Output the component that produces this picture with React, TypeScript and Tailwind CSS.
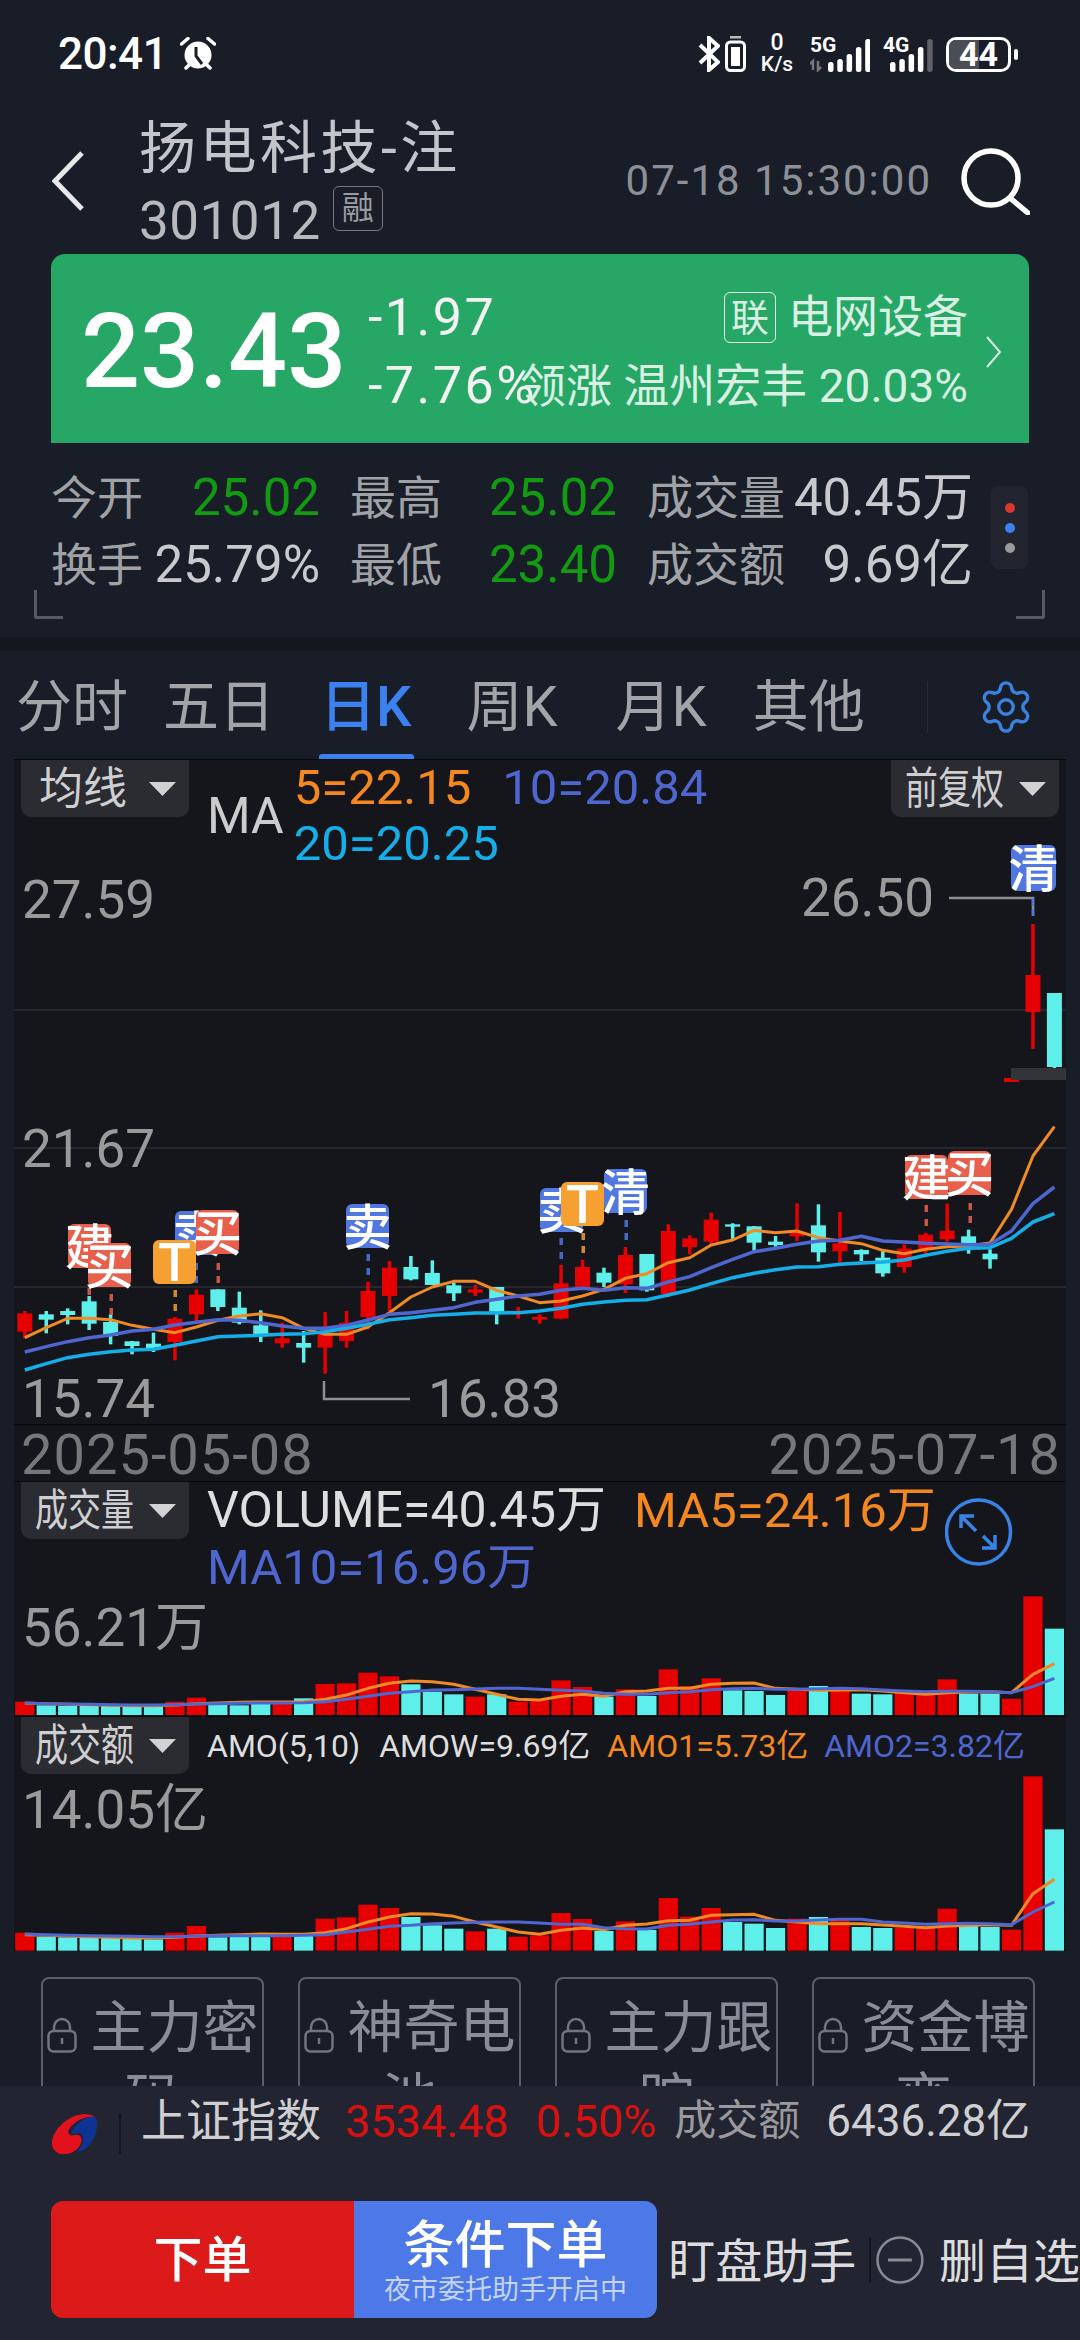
import { Settings } from "lucide-react";

const RED = "#e60000";
const CYAN = "#5eefea";
const ORANGE = "#f08a24";
const BLUE = "#4f66cf";
const SKY = "#14afe8";

const barX = (i: number) => 24.8 + 21.45 * i;
// values below are read off the reference, y = top + z / 3
const kY = (z: number) => 1080 + z / 3;
const subY = (z: number) => 1440 + z / 3;

const isRed = [0, 7, 8, 12, 14, 15, 16, 17, 21, 23, 24, 25, 26, 28, 30, 31, 32, 36, 38, 41, 42, 43, 46, 47];

const candles = [
  [690, 697, 752, 772], [690, 700, 716, 757], [682, 690, 702, 730], [645, 661, 728, 747], [700, 723, 765, 790],
  [780, 781, 795, 820], [755, 788, 802, 813], [708, 713, 783, 838], [625, 641, 700, 722], [625, 625, 678, 690],
  [632, 680, 725, 730], [688, 733, 765, 783], [725, 772, 787, 800], [750, 786, 800, 845], [693, 755, 800, 878],
  [690, 725, 780, 800], [602, 630, 708, 745], [540, 560, 645, 690], [525, 558, 595, 598], [538, 576, 612, 612],
  [605, 613, 637, 660], [612, 625, 635, 645], [618, 618, 692, 730], [678, 690, 695, 713], [700, 708, 716, 728],
  [552, 607, 713, 715], [536, 558, 622, 625], [560, 575, 605, 618], [498, 522, 610, 636], [519, 519, 628, 632],
  [430, 450, 640, 648], [463, 472, 498, 520], [395, 416, 482, 490], [427, 430, 437, 475], [435, 436, 485, 510],
  [465, 482, 492, 497], [367, 455, 466, 480], [370, 433, 514, 542], [393, 487, 511, 545], [505, 507, 520, 540],
  [510, 530, 577, 587], [490, 503, 558, 575], [455, 461, 505, 518], [368, 449, 475, 482], [446, 466, 487, 518],
  [505, 518, 535, 563], [-9, -9, 3, 3], [-471, -318, -207, -96], [-264, -264, -42, -36],
];

const ma5 = [770, 740, 712, 712, 716, 733, 745, 755, 738, 718, 705, 698, 710, 742, 760, 760, 738, 695, 648, 618, 601, 601, 628, 645, 665, 660, 645, 625, 592, 578, 545, 530, 492, 477, 448, 455, 450, 470, 480, 488, 508, 518, 505, 497, 495, 486, 385, 225, 137];
const ma10 = [813, 797, 782, 770, 762, 750, 745, 732, 724, 716, 718, 725, 735, 742, 742, 733, 717, 700, 695, 688, 680, 664, 655, 645, 640, 628, 622, 628, 620, 622, 603, 587, 560, 535, 512, 502, 490, 480, 478, 466, 480, 483, 487, 489, 491, 490, 450, 368, 318];
const ma20 = [867, 848, 830, 820, 812, 807, 805, 793, 780, 767, 765, 763, 760, 758, 752, 742, 730, 716, 710, 703, 700, 696, 696, 695, 690, 682, 670, 663, 658, 656, 642, 627, 608, 590, 577, 566, 558, 557, 550, 546, 543, 537, 523, 511, 502, 500, 472, 423, 398];

const volTops = [782, 793, 795, 795, 795, 798, 798, 782, 770, 790, 793, 788, 782, 772, 729, 727, 695, 706, 730, 752, 760, 767, 760, 782, 778, 718, 738, 767, 745, 765, 685, 735, 712, 748, 750, 762, 745, 735, 745, 758, 760, 752, 762, 715, 758, 758, 773, 466, 563];
const volMa5 = [787, 788, 790, 791, 793, 794, 794, 792, 788, 786, 784, 783, 783, 782, 775, 762, 742, 727, 720, 722, 730, 745, 760, 775, 777, 766, 760, 766, 752, 750, 742, 742, 730, 727, 726, 742, 745, 748, 747, 746, 750, 755, 760, 755, 753, 752, 755, 700, 668];
const volMa10 = [786, 788, 789, 790, 791, 792, 792, 791, 789, 788, 787, 786, 786, 785, 782, 775, 766, 757, 752, 747, 746, 744, 742, 742, 745, 748, 750, 757, 760, 760, 755, 752, 746, 743, 742, 745, 745, 743, 742, 743, 747, 750, 752, 751, 751, 752, 755, 737, 712];

const amoTops = [1472, 1484, 1486, 1487, 1487, 1490, 1492, 1472, 1452, 1486, 1485, 1482, 1485, 1474, 1430, 1426, 1388, 1398, 1425, 1450, 1460, 1468, 1460, 1484, 1480, 1413, 1431, 1467, 1438, 1464, 1368, 1424, 1398, 1440, 1445, 1458, 1430, 1425, 1435, 1455, 1458, 1457, 1457, 1400, 1452, 1455, 1463, 1003, 1162];
const amoMa5 = [1478, 1480, 1482, 1484, 1486, 1488, 1488, 1486, 1482, 1480, 1478, 1476, 1477, 1477, 1472, 1460, 1440, 1425, 1415, 1416, 1423, 1440, 1455, 1470, 1477, 1465, 1458, 1463, 1450, 1446, 1436, 1435, 1420, 1418, 1417, 1435, 1440, 1445, 1445, 1445, 1449, 1453, 1457, 1452, 1450, 1448, 1450, 1355, 1312];
const amoMa10 = [1476, 1478, 1480, 1481, 1482, 1483, 1484, 1484, 1482, 1481, 1481, 1481, 1481, 1480, 1478, 1470, 1462, 1453, 1450, 1445, 1443, 1441, 1440, 1440, 1443, 1447, 1447, 1457, 1460, 1461, 1450, 1447, 1440, 1434, 1433, 1437, 1437, 1434, 1432, 1432, 1440, 1443, 1447, 1445, 1444, 1445, 1448, 1410, 1380];

const SELL = "#5078e0";
const BUY = "#e8604c";
const TRADE = "#f5a030";

// x, y are the top left of the flag, dashes in page px
const flags = [
  { t: "建", x: 68, y: 1223, c: BUY, line: 89, dash: [1287] },
  { t: "卖", x: 175, y: 1210, c: SELL, line: 196, dash: [1262, 1275] },
  { t: "T", x: 153, y: 1239, c: TRADE, line: 175, dash: [1289, 1303] },
  { t: "买", x: 88, y: 1242, c: BUY, line: 111, dash: [1293, 1307] },
  { t: "买", x: 196, y: 1209, c: BUY, line: 218, dash: [1262, 1275] },
  { t: "卖", x: 346, y: 1203, c: SELL, line: 368, dash: [1253, 1267] },
  { t: "卖", x: 540, y: 1187, c: SELL, line: 561, dash: [1237, 1251] },
  { t: "T", x: 561, y: 1181, c: TRADE, line: 583, dash: [1232, 1245] },
  { t: "清", x: 604, y: 1168, c: SELL, line: 626, dash: [1219, 1232] },
  { t: "建", x: 905, y: 1154, c: BUY, line: 926, dash: [1204, 1218] },
  { t: "买", x: 948, y: 1150, c: BUY, line: 970, dash: [1202, 1215] },
];

const linePoints = (vals: number[], toY: (z: number) => number) =>
  vals.map((v, i) => `${barX(i)},${toY(v)}`).join(" ");

function KChart() {
  return (
    <svg className="absolute inset-0" width="1052" height="664" viewBox="14 759 1052 664">
      <line x1="14" x2="1066" y1="1009" y2="1009" stroke="#26282e" strokeWidth="2" />
      <line x1="14" x2="1066" y1="1147" y2="1147" stroke="#26282e" strokeWidth="2" />
      <line x1="14" x2="1066" y1="1286" y2="1286" stroke="#26282e" strokeWidth="2" />
      {candles.map((c, i) => {
        const color = isRed.includes(i) ? RED : CYAN;
        return (
          <g key={i} fill={color}>
            <rect x={barX(i) - 1.75} y={kY(c[0])} width="3.5" height={(c[3] - c[0]) / 3} />
            <rect x={barX(i) - 7.5} y={kY(c[1])} width="15" height={(c[2] - c[1]) / 3} />
          </g>
        );
      })}
      <polyline points={linePoints(ma5, kY)} fill="none" stroke={ORANGE} strokeWidth="3" strokeLinejoin="round" />
      <polyline points={linePoints(ma10, kY)} fill="none" stroke={BLUE} strokeWidth="3.5" strokeLinejoin="round" />
      <polyline points={linePoints(ma20, kY)} fill="none" stroke={SKY} strokeWidth="3.5" strokeLinejoin="round" />
      <rect x="1011" y="1067" width="55" height="12" fill="#333438" />
      {/* high / low leaders */}
      <path d="M949 897H1033V915" fill="none" stroke="#8f8f8f" strokeWidth="2.5" />
      <path d="M1033 897V915" stroke="#5078e0" strokeWidth="2.5" strokeDasharray="8 3" />
      <path d="M324 1380V1398H410" fill="none" stroke="#8f8f8f" strokeWidth="2.5" />
      {/* trade flags */}
      {flags.map((f, i) => (
        <g key={i}>
          {f.dash.map((d) => (
            <rect key={d} x={f.line - 1.5} y={d} width="3.5" height="7" fill={f.c} opacity="0.85" />
          ))}
          <rect x={f.x} y={f.y} width="43" height="44" rx="6" fill={f.c} />
          <text
            x={f.x + 21.5}
            y={f.y + 41}
            textAnchor="middle"
            fontSize={f.t === "T" ? 54 : 49}
            fontWeight={500}
            fill="#fff"
          >
            {f.t}
          </text>
        </g>
      ))}
      <rect x="1011" y="844" width="45" height="46" rx="6" fill={SELL} />
      <text x="1033.5" y="886" textAnchor="middle" fontSize="50" fontWeight={500} fill="#fff">
        清
      </text>
    </svg>
  );
}

function BarsChart({
  tops,
  a,
  b,
  base,
  height,
  top,
}: {
  tops: number[];
  a: number[];
  b: number[];
  base: number;
  height: number;
  top: number;
}) {
  return (
    <svg className="absolute inset-0" width="1052" height={height} viewBox={`14 ${top} 1052 ${height}`}>
      {tops.map((v, i) => (
        <rect
          key={i}
          x={barX(i) - 9.6}
          y={subY(v)}
          width="19.2"
          height={(base - v) / 3}
          fill={isRed.includes(i) ? RED : CYAN}
        />
      ))}
      <polyline points={linePoints(a, subY)} fill="none" stroke={ORANGE} strokeWidth="3" strokeLinejoin="round" />
      <polyline points={linePoints(b, subY)} fill="none" stroke={BLUE} strokeWidth="3" strokeLinejoin="round" />
    </svg>
  );
}

function DropButton({ label, narrow }: { label: string; narrow?: boolean }) {
  return (
    <div className="flex h-[57px] w-[168px] shrink-0 items-center rounded-b-[10px] bg-[#2a2c32] text-[44px] leading-none text-[#cfcfd2]">
      {narrow ? (
        <span className="ml-[14px] w-[100px] origin-left scale-x-75 whitespace-nowrap">{label}</span>
      ) : (
        <span className="ml-[18px] w-[96px] whitespace-nowrap">{label}</span>
      )}
      <svg className="ml-[14px]" width="27" height="14" viewBox="0 0 27 14">
        <path d="M0 0H27L13.5 14Z" fill="#d2d2d4" />
      </svg>
    </div>
  );
}

function BluetoothIcon() {
  return (
    <svg width="22" height="36" viewBox="0 0 22 36" fill="none" stroke="#fff" strokeWidth="4">
      <path d="M2 9 20 26 11 34V2L20 10 2 27" />
    </svg>
  );
}

function SaverIcon() {
  return (
    <svg width="21" height="36" viewBox="0 0 21 36" className="ml-[5px]">
      <rect x="5" y="0" width="11" height="2.5" fill="#bbb" />
      <rect x="1.5" y="6" width="18" height="28.5" rx="4" fill="none" stroke="#fff" strokeWidth="3" />
      <rect x="6" y="11" width="9" height="19" fill="#fff" />
    </svg>
  );
}

function Signal({ label, arrows, lastDim }: { label: string; arrows?: boolean; lastDim?: boolean }) {
  const bars = [10, 13, 18, 25, 33];
  const start = arrows ? 18 : 7;
  return (
    <div className={`relative h-[35px] ${arrows ? "w-[60px]" : "w-[50px]"}`}>
      <span className="absolute left-0 top-[-3px] text-[21px] font-bold leading-[22px] text-white">{label}</span>
      <svg className="absolute inset-0" width="60" height="35" viewBox="0 0 60 35">
        {arrows && <path d="M3 33V24L0 27M8 24V33L11 30" fill="none" stroke="#777" strokeWidth="2.5" />}
        {bars.map((h, i) => (
          <rect
            key={i}
            x={start + i * 9.3}
            y={35 - h}
            width="5.5"
            height={h}
            rx="2.5"
            fill={lastDim && i === 4 ? "#5f6167" : "#fff"}
          />
        ))}
      </svg>
    </div>
  );
}

function AlarmIcon() {
  return (
    <svg width="36" height="34" viewBox="0 0 36 34" className="ml-[13px]">
      <circle cx="18" cy="18" r="13.5" fill="#fff" />
      <path d="M16 10V19L22 27" fill="none" stroke="#191d28" strokeWidth="3" />
      <path d="M1.5 7 8 1.5M34.5 7 28 1.5M6 31l4-4M30 31l-4-4" stroke="#fff" strokeWidth="3.5" strokeLinecap="round" />
    </svg>
  );
}

function StatusBar() {
  return (
    <div className="flex h-[108px] items-center pl-[58px] pr-[62px] text-white">
      <span className="text-[44px] font-medium leading-none tracking-[-0.5px]">20:41</span>
      <AlarmIcon />
      <div className="ml-auto flex items-center">
        <BluetoothIcon />
        <SaverIcon />
        <div className="ml-[13px] flex w-[36px] flex-col items-center leading-none">
          <span className="text-[23px] font-medium leading-[20px]">0</span>
          <span className="text-[21px] font-medium leading-[22px]">K/s</span>
        </div>
        <div className="ml-[15px]">
          <Signal label="5G" arrows />
        </div>
        <div className="ml-[13px]">
          <Signal label="4G" lastDim />
        </div>
        <div className="relative ml-[13px] flex h-[35px] w-[65px] items-center justify-center overflow-hidden rounded-[10px] border-[3px] border-white">
          <div className="absolute inset-y-0 left-0 w-[30px] bg-[#4b4d55]" />
          <span className="relative text-[34px] font-bold leading-none">44</span>
        </div>
        <div className="ml-[3px] h-[11px] w-[4px] rounded-full bg-white" />
      </div>
    </div>
  );
}

function TitleRow() {
  return (
    <div className="flex h-[146px] items-center pl-[52px] pr-[50px]">
      <svg width="32" height="60" viewBox="0 0 32 60" fill="none" stroke="#e8e8ea" strokeWidth="5">
        <path d="M30 2 3 30 30 58" />
      </svg>
      <div className="ml-[55px] flex-1 pt-[6px]">
        <div className="flex h-[74px] items-center text-[57px] leading-none tracking-[3.5px] text-[#c4c5ca]">扬电科技-注</div>
        <div className="flex h-[72px] items-center text-[53px] leading-none tracking-[0.5px] text-[#b8b9bd]">
          301012
          <span className="mb-[26px] ml-[12px] flex h-[45px] w-[50px] items-center justify-center rounded-[6px] border border-[#777982] text-[32px] tracking-normal text-[#9b9ca2]">
            融
          </span>
        </div>
      </div>
      <span className="text-[42px] leading-none tracking-[2px] text-[#8e9097]">07-18 15:30:00</span>
      <svg className="ml-[29px]" width="69" height="68" viewBox="0 0 69 68" fill="none" stroke="#fff" strokeWidth="5.5">
        <circle cx="30" cy="31" r="27" />
        <path d="M49 51 67 66" strokeLinecap="round" />
      </svg>
    </div>
  );
}

function PricePanel() {
  return (
    <div className="mx-[51px] flex h-[189px] items-center rounded-t-[14px] bg-[#27a765] pt-[6px] text-white">
      <span className="ml-[30px] w-[287px] text-[104px] font-medium leading-none">23.43</span>
      <div className="w-[152px] whitespace-nowrap text-[52px] leading-[68px] tracking-[2.5px] text-[#f2f2f2]">
        <div>-1.97</div>
        <div>-7.76%</div>
      </div>
      <div className="ml-auto flex flex-col items-end text-[#d9f1e4]">
        <div className="flex h-[68px] items-center text-[45px] leading-none">
          <span className="mr-[12px] flex h-[51px] w-[52px] items-center justify-center rounded-[6px] border-[1.5px] border-[#e4f5eb] text-[38px]">
            联
          </span>
          电网设备
        </div>
        <div className="flex h-[68px] items-center whitespace-nowrap text-[46px] leading-none">领涨 温州宏丰 20.03%</div>
      </div>
      <svg className="ml-[18px] mr-[28px]" width="15" height="32" viewBox="0 0 15 32" fill="none" stroke="#dff3e8" strokeWidth="2">
        <path d="M1 1 14 16 1 31" />
      </svg>
    </div>
  );
}

function Stat({ label, value, green }: { label: string; value: string; green?: boolean }) {
  return (
    <div className="flex h-[67px] items-center justify-between whitespace-nowrap">
      <span className="text-[46px] leading-none text-[#a0a2a6]">{label}</span>
      <span className={`text-[51px] leading-none ${green ? "text-[#129b12]" : "text-[#c9cacd]"}`}>{value}</span>
    </div>
  );
}

function StatsBlock() {
  return (
    <div className="relative flex h-[194px] items-start pl-[51px] pt-[21px]">
      <div className="grid grid-cols-[269px_267px_326px] gap-x-[30px]">
        <Stat label="今开" value="25.02" green />
        <Stat label="最高" value="25.02" green />
        <Stat label="成交量" value="40.45万" />
        <Stat label="换手" value="25.79%" />
        <Stat label="最低" value="23.40" green />
        <Stat label="成交额" value="9.69亿" />
      </div>
      <div className="ml-[18px] mt-[22px] flex h-[83px] w-[37px] flex-col items-center justify-center gap-[10px] rounded-[8px] bg-[#222530]">
        <span className="h-[10px] w-[10px] rounded-full bg-[#d8382e]" />
        <span className="h-[10px] w-[10px] rounded-full bg-[#3b82f0]" />
        <span className="h-[10px] w-[10px] rounded-full bg-[#9a9a9a]" />
      </div>
      <div className="absolute left-[34px] top-[147px] h-[29px] w-[29px] rounded-bl-[3px] border-b-[3px] border-l-[3px] border-[#585a62]" />
      <div className="absolute right-[35px] top-[147px] h-[29px] w-[29px] rounded-br-[3px] border-b-[3px] border-r-[3px] border-[#585a62]" />
    </div>
  );
}

function Tabs() {
  return (
    <div className="flex h-[108px] items-center pl-[16px] pt-[4px] text-[56px] leading-none text-[#a3a4a8]">
      <span>分时</span>
      <span className="ml-[35px]">五日</span>
      <span className="relative ml-[45px] font-medium text-[#3b82f0]">
        日K
        <span className="absolute bottom-[-24px] left-[-1px] h-[5px] w-[95px] rounded-t-[3px] bg-[#3b82f0]" />
      </span>
      <span className="ml-[55px]">周K</span>
      <span className="ml-[58px]">月K</span>
      <span className="ml-[46px]">其他</span>
      <div className="ml-[62px] h-[52px] w-px bg-[#2a2d36]" />
      <Settings className="ml-[49px] text-[#3a82e0]" size={58} strokeWidth={1.4} />
    </div>
  );
}

function ChartPanels() {
  return (
    <div className="mx-[14px] border-y border-[#08090c] bg-[#14161c]">
      {/* K line */}
      <div className="relative h-[664px]">
        <KChart />
        <div className="relative flex items-start text-[49px] leading-[56px]">
          <div className="ml-[7px]">
            <DropButton label="均线" />
          </div>
          <div className="ml-[18px] flex h-[112px] items-center text-[50px] text-[#cccccc]">MA</div>
          <div className="ml-[10px]">
            <div className="flex">
              <span className="text-[#f5871f]">5=22.15</span>
              <span className="ml-[31px] text-[#4f66cf]">10=20.84</span>
            </div>
            <div className="text-[#14afe8]">20=20.25</div>
          </div>
          <div className="ml-auto mr-[7px]">
            <DropButton label="前复权" narrow />
          </div>
        </div>
        <span className="absolute left-[8px] top-[110px] text-[53px] leading-[60px] text-[#9a9a9a]">27.59</span>
        <span className="absolute left-[787px] top-[108px] text-[53px] leading-[60px] text-[#9a9a9a]">26.50</span>
        <span className="absolute left-[8px] top-[359px] text-[53px] leading-[60px] text-[#9a9a9a]">21.67</span>
        <span className="absolute left-[8px] top-[609px] text-[53px] leading-[60px] text-[#9a9a9a]">15.74</span>
        <span className="absolute left-[414px] top-[609px] text-[53px] leading-[60px] text-[#9a9a9a]">16.83</span>
      </div>

      {/* dates */}
      <div className="flex h-[58px] items-center justify-between border-y border-[#08090c] pl-[7px] pr-[5px] pt-[4px] text-[56px] leading-none tracking-[1px] text-[#767779]">
        <span>2025-05-08</span>
        <span>2025-07-18</span>
      </div>

      {/* volume */}
      <div className="relative h-[234px]">
        <BarsChart tops={volTops} a={volMa5} b={volMa10} base={822} height={234} top={1481} />
        <div className="relative flex items-start text-[49px] leading-[57px]">
          <div className="ml-[7px]">
            <DropButton label="成交量" narrow />
          </div>
          <div className="ml-[18px] w-[738px]">
            <div className="flex whitespace-nowrap">
              <span className="text-[50px] text-[#dedede]">VOLUME=40.45万</span>
              <span className="ml-[28px] text-[#f5871f]">MA5=24.16万</span>
            </div>
            <div className="text-[#4f66cf]">MA10=16.96万</div>
          </div>
          <svg className="mt-[16px]" width="68" height="68" viewBox="0 0 68 68" fill="none" stroke="#3a83e6" strokeWidth="3.5">
            <circle cx="33.5" cy="34" r="32" />
            <path d="M16 30V18H29M18 20 31 33M38 38 50 50M50 37V50H37" />
          </svg>
        </div>
        <span className="absolute left-[8px] top-[116px] text-[53px] leading-[60px] text-[#9a9a9a]">56.21万</span>
      </div>

      {/* amount */}
      <div className="relative h-[234px] border-t border-[#08090c]">
        <BarsChart tops={amoTops} a={amoMa5} b={amoMa10} base={1526} height={234} top={1715} />
        <div className="relative flex items-start">
          <div className="ml-[7px]">
            <DropButton label="成交额" narrow />
          </div>
          <div className="ml-[18px] flex h-[57px] items-center whitespace-nowrap text-[32px] leading-none">
            <span className="text-[#dedede]">AMO(5,10)</span>
            <span className="ml-[19px] text-[#dedede]">AMOW=9.69亿</span>
            <span className="ml-[17px] text-[#f5871f]">AMO1=5.73亿</span>
            <span className="ml-[16px] text-[#4f66cf]">AMO2=3.82亿</span>
          </div>
        </div>
        <span className="absolute left-[8px] top-[63px] text-[53px] leading-[60px] text-[#9a9a9a]">14.05亿</span>
      </div>
    </div>
  );
}

function LockIcon() {
  return (
    <svg className="mr-[14px] inline-block align-[-6px]" width="30" height="36" viewBox="0 0 30 36" fill="none" stroke="#72747f" strokeWidth="2.5">
      <path d="M7 14V10a8 8 0 0 1 16 0v4" />
      <rect x="1.5" y="14" width="27" height="20.5" rx="5" />
      <path d="M15 21v6" />
    </svg>
  );
}

const lockedTools = ["主力密码", "神奇电池", "主力跟踪", "资金博弈"];

function LockedTools() {
  return (
    <div className="h-[135px] overflow-hidden px-[41px] pt-[26px]">
      <div className="flex gap-[34px]">
        {lockedTools.map((name) => (
          <div
            key={name}
            className="h-[200px] w-[223px] rounded-[8px] border-2 border-[#5c5e68] px-[2px] pt-[13px] text-center text-[56px] leading-[72px] text-[#8a8c98]"
          >
            <LockIcon />
            {name}
          </div>
        ))}
      </div>
    </div>
  );
}

function BottomBar() {
  return (
    <div className="h-[254px] bg-[#222531]">
      <div className="flex h-[68px] items-center pl-[52px] pt-[2px] whitespace-nowrap leading-none">
        <svg className="mt-[26px]" width="46" height="42" viewBox="51 2113 46 42">
          <path d="M70 2134C72 2126 86 2114 93 2117 98 2119 97 2133 90 2143 86 2149 80 2152 76 2152 82 2146 85 2138 79 2133Z" fill="#0d3494" />
          <path d="M94 2117C88 2112 76 2113 66 2120 56 2127 50 2137 51 2145 53 2155 64 2156 72 2152 79 2148 83 2140 79 2136 76 2133 71 2137 68 2134 65 2130 72 2124 78 2120 84 2117 90 2116 94 2117Z" fill="#e3101e" />
        </svg>
        <div className="ml-[21px] mt-[26px] h-[40px] w-[2px] bg-[#14161c]" />
        <span className="ml-[20px] text-[45px] text-[#cfcfd2]">上证指数</span>
        <span className="ml-[24px] text-[45px] text-[#d81010]">3534.48</span>
        <span className="ml-[27px] text-[45px] text-[#d81010]">0.50%</span>
        <span className="ml-[18px] text-[42px] text-[#9a9a9e]">成交额</span>
        <span className="ml-[26px] text-[44px] text-[#cfcfd2]">6436.28亿</span>
      </div>
      <div className="flex items-center pl-[51px] pt-[47px] whitespace-nowrap leading-none">
        <div className="flex h-[117px] w-[304px] items-center justify-center rounded-l-[12px] bg-[#dc1a1a] pt-[2px] text-[49px] font-medium text-white">
          下单
        </div>
        <div className="flex h-[117px] w-[304px] flex-col items-center justify-center rounded-r-[12px] bg-[#4c78e8] pt-[5px]">
          <span className="text-[51px] font-medium text-white">条件下单</span>
          <span className="mt-[6px] text-[27px] text-[#c5d3f5]">夜市委托助手开启中</span>
        </div>
        <span className="ml-[11px] mt-[3px] text-[47px] text-[#dcdcde]">盯盘助手</span>
        <div className="ml-[13px] h-[44px] w-[2px] bg-[#14161c]" />
        <svg className="ml-[5px]" width="48" height="48" viewBox="0 0 48 48" fill="none" stroke="#8a8b90" strokeWidth="2.5">
          <circle cx="24" cy="24" r="22.5" />
          <path d="M12 24H36" strokeWidth="3" />
        </svg>
        <span className="ml-[15px] mt-[3px] text-[47px] text-[#dcdcde]">删自选</span>
      </div>
    </div>
  );
}

export default function App() {
  return (
    <div className="h-[2340px] w-[1080px] overflow-hidden bg-[#191d28] font-[Roboto,'Noto_Sans_CJK_SC',sans-serif]">
      <StatusBar />
      <TitleRow />
      <PricePanel />
      <StatsBlock />
      <div className="h-[14px] bg-[#14171e]" />
      <Tabs />
      <ChartPanels />
      <LockedTools />
      <BottomBar />
    </div>
  );
}
